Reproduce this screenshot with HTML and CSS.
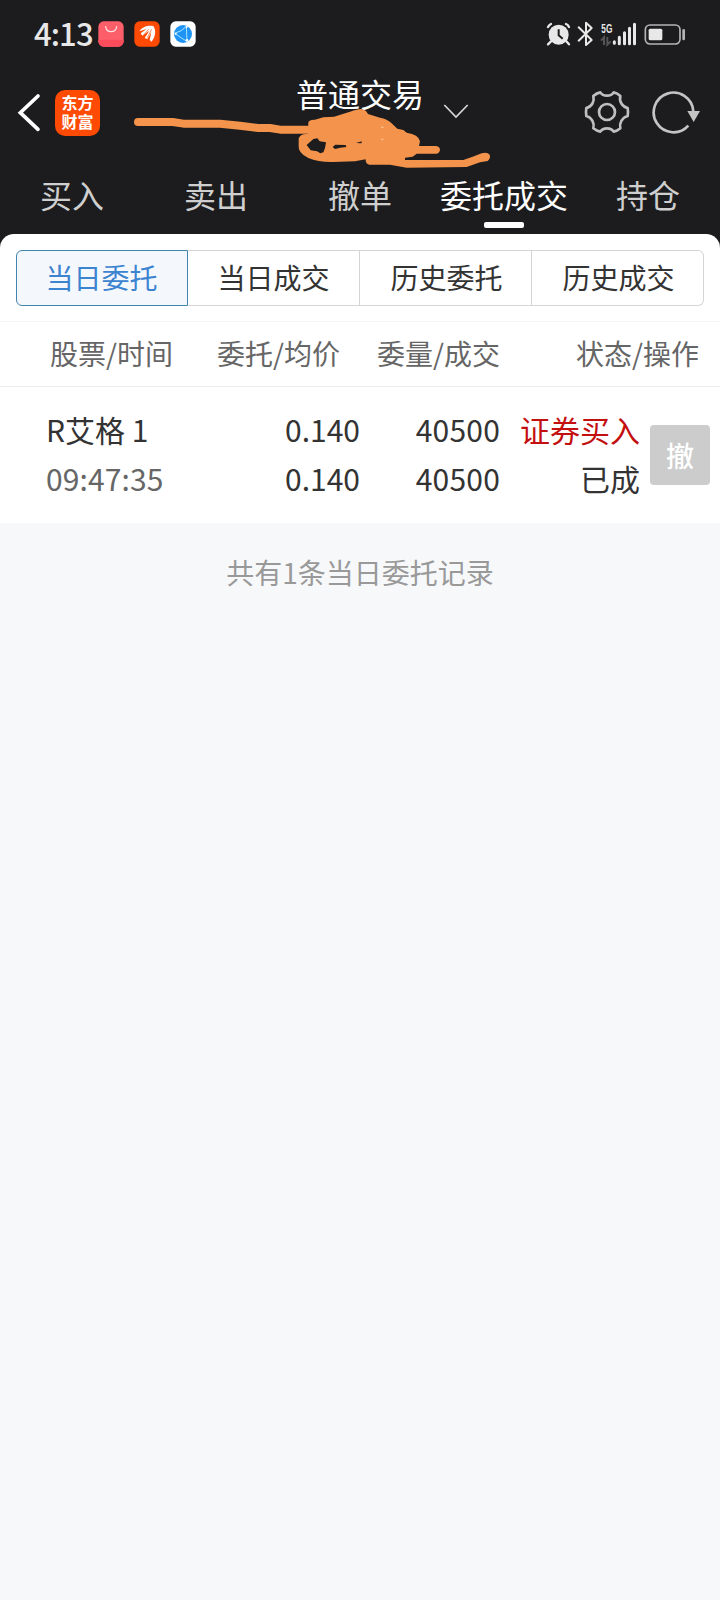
FILE: index.html
```html
<!DOCTYPE html>
<html lang="zh-CN">
<head>
<meta charset="utf-8">
<title>普通交易</title>
<link rel="stylesheet" href="styles.css">
</head>
<body>
<header class="top">
  <div class="status">
    <div class="status-left">
      <span class="clock">4:13</span>
      <svg class="app" viewBox="0 0 78 78"><rect x="1" y="1" width="76" height="76" rx="16" fill="#fd5f6a"/><path d="M1 56h76v5a16 16 0 0 1-16 16h-44a16 16 0 0 1-16-16z" fill="#fb4c5b"/><path d="M23 17c2 20 30 20 33 0" fill="none" stroke="#ffe3e3" stroke-width="3.5" stroke-linecap="round"/></svg>
      <svg class="app" viewBox="0 0 78 78"><rect x="1" y="1" width="76" height="76" rx="16" fill="#fe4a03"/><path d="M16 31C24 17 42 12 58 15C64 24 66 36 60 50L53 62L47 57L52 34L40 54L32 51L46 29L25 44L20 37L38 24Z" fill="#fff"/><path d="M44 25L29 42M53 25L40 50" stroke="#fe4a03" stroke-width="2"/></svg>
      <svg class="app" viewBox="0 0 78 78"><rect x="1" y="1" width="76" height="76" rx="16" fill="#fff"/><circle cx="39" cy="39" r="27" fill="#2094f5"/><path d="M14 37Q35 32 49 16L51 61Q35 52 14 37" fill="none" stroke="#a5e5ff" stroke-width="3"/><circle cx="50" cy="18" r="3" fill="#fff"/><circle cx="51" cy="58" r="4" fill="#fff"/><circle cx="17" cy="38" r="3" fill="#fff"/></svg>
    </div>
    <svg class="status-right" viewBox="45 60 429 84">
      <g fill="#e8e8e8" stroke="none">
        <circle cx="86" cy="104" r="30"/>
        <path d="M63 124l-9 9M109 124l8 9M54 81q4-7 9-9M108 72q6 2 9 9" fill="none" stroke="#e8e8e8" stroke-width="7" stroke-linecap="round"/>
        <path d="M86 88v18l12 10" fill="none" stroke="#1c1c1e" stroke-width="6"/>
        <path d="M146 82l39 38-17 15V68l17 16-39 38" fill="none" stroke="#e8e8e8" stroke-width="6" stroke-linecap="round" stroke-linejoin="round"/>
        <text class="net" x="214" y="98" textLength="33" lengthAdjust="spacingAndGlyphs">5G</text>
        <path d="M213 122l9-10v23M232 111v23l10-10" fill="none" stroke="#555557" stroke-width="6"/>
        <path d="M253 125v5M268 112v19M283.500 98v33M298.500 85v46M313.500 73v58" fill="none" stroke="#e8e8e8" stroke-width="9" stroke-linecap="round"/>
        <rect x="346" y="75" width="104" height="57" rx="14" fill="none" stroke="#b4b4b6" stroke-width="5"/>
        <rect x="356" y="86" width="41" height="35" rx="5"/>
        <rect x="457" y="87" width="8" height="34" rx="4" fill="#b4b4b6"/>
      </g>
    </svg>
  </div>
  <div class="nav">
    <div class="nav-side">
      <svg class="back" viewBox="50 280 72 117"><path d="M113 289L60 339L113 389" fill="none" stroke="#fff" stroke-width="11" stroke-linecap="round"/></svg>
      <div class="logo">东方<br>财富</div>
    </div>
    <h1 class="title">普通交易</h1>
    <div class="nav-side nav-end">
      <svg class="chevron" viewBox="486 115 84 48"><path d="M493 121L528 157L563 121" fill="none" stroke="#d8d8d8" stroke-width="5"/></svg>
      <svg class="gear" viewBox="162 267 138 138"><g fill="none" stroke="#bfbfbf" stroke-width="8"><path d="M211 277C219 290 243 290 251 277Q262 279 271 288C267 304 276 320 293 324Q295 336 293 348C276 353 267 370 271 385Q262 393 251 395C243 382 219 382 211 395Q200 393 190 385C194 370 186 353 169 348Q167 336 169 324C186 320 194 304 190 288Q200 279 211 277Z" stroke-linejoin="round"/><circle cx="231" cy="336" r="24"/></g></svg>
      <svg class="refresh" viewBox="366 270 150 138"><path d="M475 377A59.500 59.500 0 1 1 490 334" fill="none" stroke="#c4c4c4" stroke-width="8"/><path d="M472 333h38l-19 33z" fill="#c4c4c4"/></svg>
    </div>
    <svg class="scribble" viewBox="-486 0 1146 330">
      <g fill="#f4934b">
        <path d="M-426 171H-322L-290 176H-180L-120 182L-65 189H-30L0 194H95" fill="none" stroke="#f4934b" stroke-width="24" stroke-linecap="round" stroke-linejoin="round"/>
        <path fill-rule="evenodd" d="M85 172Q88 163 105 164L130 157L162 155L210 140Q240 130 248 133Q260 137 264 147L300 158Q322 162 334 174L352 191L370 195L380 203Q416 208 420 229L417 243H468Q480 245 480 255Q478 266 468 266H410L398 275L375 278V285H550L578 275L605 265Q622 260 629 269Q633 279 623 288L600 292L560 306L380 308L330 299H268Q256 297 257 283L225 289L160 291Q115 292 85 279Q53 264 56 240V220Q62 205 84 207ZM80 240L100 222L112 220L119 229L138 232L135 249L130 262L121 265L111 259L92 256ZM158 246L166 239L197 240L199 246L181 248L165 252ZM228 234L246 229L244 235Z"/>
        <path d="M303 187h8M303 223h8" stroke="#f8c69f" stroke-width="3"/>
      </g>
    </svg>
  </div>
  <nav class="tabs">
    <a class="tab">买入</a><a class="tab">卖出</a><a class="tab">撤单</a><a class="tab tab-on">委托成交</a><a class="tab">持仓</a>
  </nav>
</header>
<main class="sheet">
  <div class="segments">
    <a class="seg seg-on">当日委托</a><a class="seg">当日成交</a><a class="seg">历史委托</a><a class="seg">历史成交</a>
  </div>
  <div class="row head">
    <span>股票/时间</span><span class="num">委托/均价</span><span class="num">委量/成交</span><span class="num">状态/操作</span>
  </div>
  <div class="row order">
    <div class="cell"><span>R艾格 1</span><span class="time">09:47:35</span></div>
    <div class="cell num"><span>0.140</span><span>0.140</span></div>
    <div class="cell num"><span class="qty">40500</span><span class="qty">40500</span></div>
    <div class="cell num"><span class="buy">证券买入</span><span>已成</span></div>
    <button class="cancel">撤</button>
  </div>
</main>
<p class="summary">共有1条当日委托记录</p>
</body>
</html>
```
FILE: styles.css
```css
* { box-sizing: border-box; }
body {
  margin: 0;
  width: 720px;
  min-height: 1600px;
  background: #f7f8fa;
  color: #333;
  font-family: "Noto Sans CJK SC", sans-serif;
}
svg { display: block; flex: none; }

.top { height: 250px; background: #1c1c1e; color: #fff; }
.status {
  display: flex;
  justify-content: space-between;
  height: 68px;
  padding: 0 32px 0 34px;
}
.status-left { display: flex; align-items: center; height: 68px; }
.clock {
  width: 64px;
  color: #e8e8e8;
  font-size: 31px;
  font-weight: 500;
  letter-spacing: -0.9px;
  line-height: 66px;
  height: 68px;
}
.app { width: 26px; height: 26px; margin-right: 10px; }
.status-right { width: 143px; height: 28px; margin-top: 20px; }
.net { font: 700 36px "Liberation Sans", sans-serif; }

.nav {
  position: relative;
  display: grid;
  grid-template-columns: 1fr 128px 1fr;
  height: 94px;
  padding: 0 16px;
}
.nav-side { display: flex; align-items: flex-start; }
.back { width: 24px; height: 39px; margin: 25px 0 0 1px; }
.logo {
  width: 45px;
  height: 46px;
  margin: 22px 0 0 14px;
  padding-top: 3px;
  border-radius: 10px;
  background: #fe4a03;
  font-size: 16px;
  font-weight: 700;
  line-height: 19px;
  text-align: center;
}
.title {
  margin: 2px 0 0;
  font-size: 32px;
  font-weight: 400;
  line-height: 46px;
  white-space: nowrap;
}
.chevron { width: 28px; height: 16px; margin: 35px 0 0 18px; }
.gear { width: 46px; height: 46px; margin: 21px 0 0 114px; }
.refresh { width: 50px; height: 46px; margin: 22px 0 0 22px; }
.scribble {
  position: absolute;
  left: 118px;
  top: -3px;
  width: 382px;
  height: 110px;
}

.tabs { display: grid; grid-template-columns: repeat(5, 144px); height: 72px; }
.tab {
  display: flex;
  flex-direction: column;
  align-items: center;
  padding-top: 8px;
  color: #cfcfcf;
  font-size: 32px;
  line-height: 48px;
}
.tab-on { color: #fff; }
.tab-on::after {
  content: "";
  width: 40px;
  height: 6px;
  margin-top: 4px;
  border-radius: 2px;
  background: #fff;
}

.sheet {
  position: relative;
  height: 289px;
  margin-top: -16px;
  padding-top: 16px;
  border-radius: 14px 14px 0 0;
  background: #fff;
}
.segments {
  display: grid;
  grid-template-columns: repeat(4, 172px);
  height: 56px;
  margin: 0 16px 15px;
}
.seg {
  border: 1px solid #d3d5d7;
  border-left-width: 0;
  font-size: 28px;
  line-height: 53px;
  text-align: center;
}
.seg:nth-child(n + 3) { padding-left: 2px; }
.seg:last-child { border-radius: 0 6px 6px 0; }
.seg-on {
  padding-right: 1px;
  border: 1px solid #4284b0;
  border-radius: 6px 0 0 6px;
  background: #f4f8fd;
  color: #3c83d0;
}

.row {
  display: grid;
  white-space: nowrap;
}
.num { text-align: right; }
.head {
  height: 66px;
  padding-left: 50px;
  grid-template-columns: 122px 168px 160px 199px;
  border-top: 1px solid #f5f5f5;
  border-bottom: 1px solid #ececec;
  color: #666;
  font-size: 28px;
  line-height: 63px;
}
.order {
  grid-template-columns: 146px 168px 140px 140px 60px;
  padding: 18px 0 0 46px;
  font-size: 30px;
  line-height: 49px;
}
.cell { display: flex; flex-direction: column; }
.time { color: #666; letter-spacing: 0.1px; }
.qty { letter-spacing: 0.2px; }
.buy { color: #c40f0f; }
.cancel {
  width: 60px;
  height: 60px;
  margin: 20px 0 0 10px;
  padding: 0;
  border: 0;
  border-radius: 4px;
  background: #ccc;
  color: #fff;
  font: 500 28px/58px "Noto Sans CJK SC", sans-serif;
}
.summary {
  margin: 28px 0 0;
  color: #999;
  font-size: 28px;
  line-height: 42px;
  text-align: center;
}
```
